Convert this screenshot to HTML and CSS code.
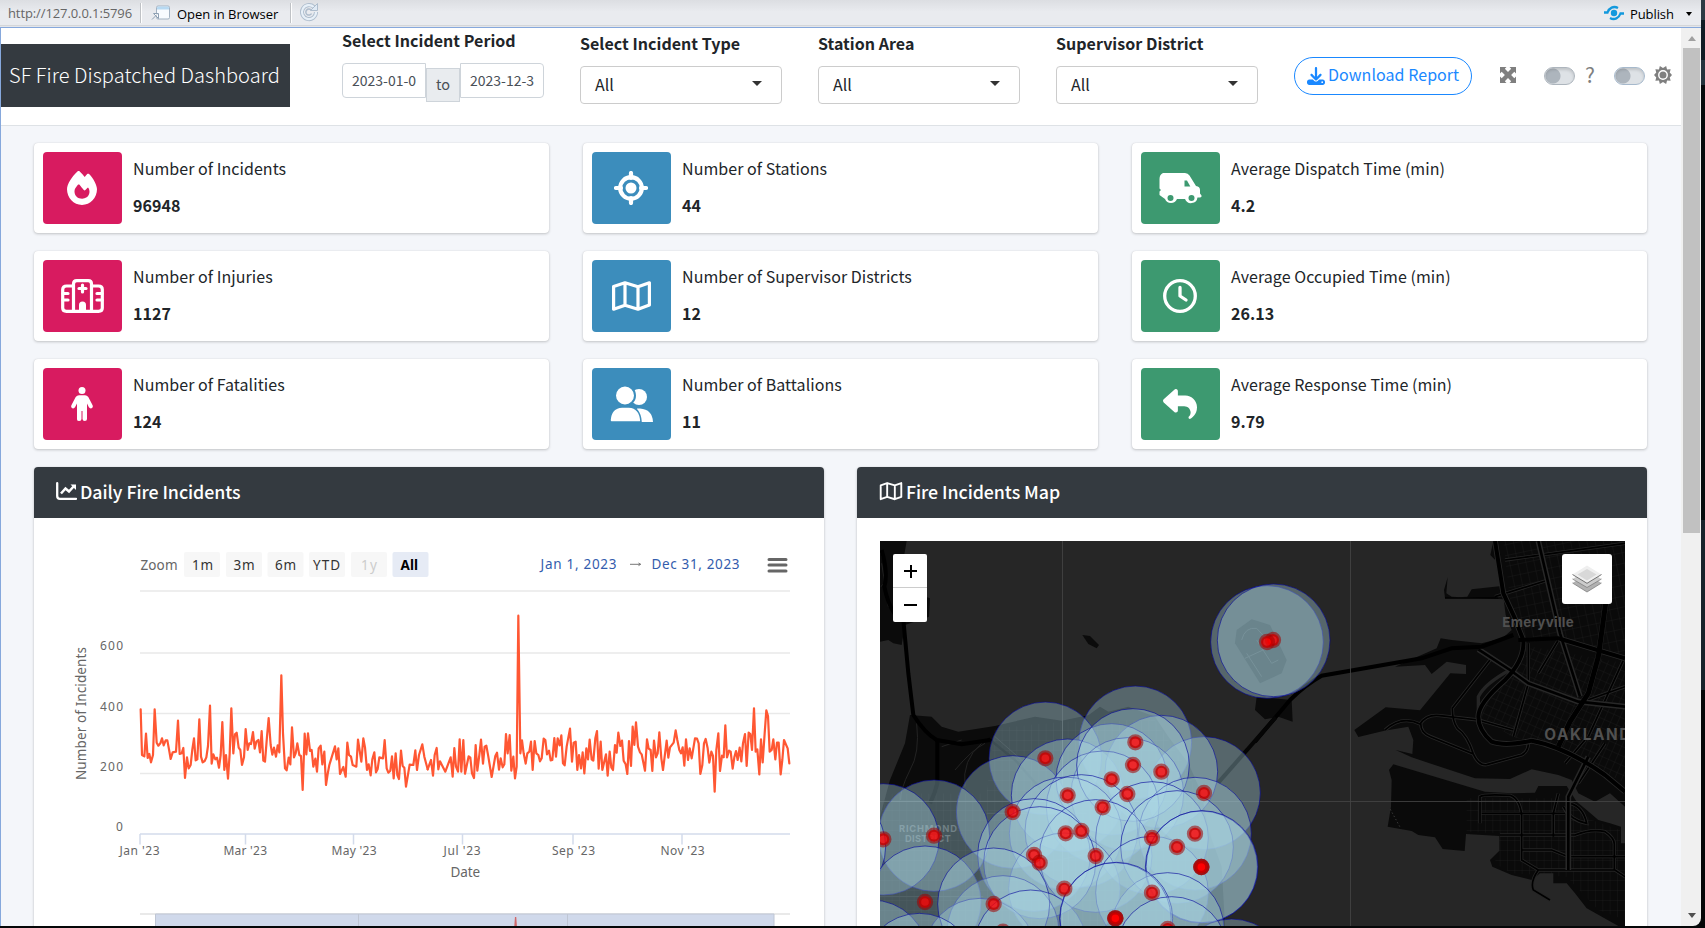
FILE: index.html
```html
<!DOCTYPE html>
<html lang="en">
<head>
<meta charset="utf-8">
<title>SF Fire Dispatched Dashboard</title>
<link rel="stylesheet" href="styles.css">
</head>
<body>
<div class="toolbar">
  <span class="url">http://127.0.0.1:5796</span>
  <i class="sep"></i>
  <svg class="open-icon" viewBox="0 0 20 16"><rect x="5.500" y="1" width="13" height="13" rx="1.500" fill="#f8fbff" stroke="#a3b2c2"/><path d="M6 4.500V2.500q0-1 1-1h10q1 0 1 1v2z" fill="#b7d9f2"/><path d="M1 14.500 6 9.500M2.500 8.500h5v5z" fill="#fff" stroke="#8ea0b3"/></svg>
  <span class="open">Open in Browser</span>
  <i class="sep sep2"></i>
  <svg class="refresh" viewBox="0 0 20 20"><path d="M17 10a7 7 0 1 1-2.200-5" fill="none" stroke="#aebdcd" stroke-width="4"/><path d="M17 10a7 7 0 1 1-2.200-5" fill="none" stroke="#e7f0f8" stroke-width="2.200"/><path d="M18.500 1.500v7h-7z" fill="#dfeaf5" stroke="#aebdcd"/><path d="M12.500 11.500a3 3 0 1 1-.5-3.500" fill="none" stroke="#aebdcd" stroke-width="1.500"/></svg>
  <span class="grow"></span>
  <svg class="pub-icon" viewBox="0 0 20 16"><g fill="none" stroke="#1399dd" stroke-width="2.300"><path d="M0 7.500h3.500C5 3 9.500.500 14 3"/><path d="M20 8.500h-3.500C15 13 10.500 15.500 6 13"/></g><circle cx="10" cy="8" r="3.200" fill="#1399dd"/></svg>
  <span class="pub">Publish</span>
  <i class="tri"></i>
</div>
<div class="viewer">
  <main class="page">
    <header class="head">
      <div class="brand"><span>SF Fire Dispatched Dashboard</span></div>
      <div class="field period">
        <label>Select Incident Period</label>
        <div class="range"><span class="date">2023-01-0</span><span class="to">to</span><span class="date last">2023-12-3</span></div>
      </div>
      <div class="field f-type"><label>Select Incident Type</label><div class="select"><span>All</span><i></i></div></div>
      <div class="field f-area"><label>Station Area</label><div class="select"><span>All</span><i></i></div></div>
      <div class="field f-dist"><label>Supervisor District</label><div class="select"><span>All</span><i></i></div></div>
      <div class="download">
        <svg viewBox="0 0 512 512"><path d="M288 32c0-18-14-32-32-32s-32 14-32 32v243l-73-73c-13-13-33-13-45 0s-13 33 0 45l128 128c12 13 32 13 45 0l128-128c12-12 12-32 0-45s-33-13-46 0l-73 73zM64 352c-35 0-64 29-64 64v32c0 35 29 64 64 64h384c35 0 64-29 64-64v-32c0-35-29-64-64-64H346l-45 45c-25 25-66 25-91 0l-45-45zm368 56a24 24 0 1 1 0 48 24 24 0 1 1 0-48z"/></svg>
        <span>Download Report</span>
      </div>
      <svg class="expand" viewBox="0 0 16 16"><path d="M0 0h6.500L4.800 1.700 8 4.900l3.200-3.200L9.500 0H16v6.500l-1.700-1.700L11.100 8l3.200 3.200L16 9.500V16H9.500l1.700-1.700L8 11.100l-3.200 3.200L6.500 16H0V9.500l1.700 1.700L4.900 8 1.700 4.800 0 6.500z"/></svg>
      <i class="toggle"></i>
      <span class="help">?</span>
      <i class="toggle blue"></i>
      <svg class="gear" viewBox="0 0 20 20"><path d="M10 2.200 13.500 0l1 4 4-.5-1 3.700L20 10l-2.500 2.800 1 3.700-4-.5-1 4L10 17.800 6.500 20l-1-4-4 .5 1-3.700L0 10l2.500-2.800-1-3.700 4 .5 1-4z"/><circle cx="10" cy="10" r="4.700" fill="none" stroke="#fff" stroke-width="1.600"/></svg>
    </header>

    <section class="cards">
      <div class="card"><div class="ico red"><svg width="30" height="34" viewBox="0 0 448 512" preserveAspectRatio="none"><path d="M159.300 5.400c7.800-7.300 19.900-7.200 27.700.1 27.600 25.900 53.500 53.800 77.700 84 11-14.400 23.500-30.100 37-42.900 7.900-7.400 20.100-7.400 28 .1 34.600 33 63.900 76.600 84.500 118 20.300 40.800 33.800 82.500 33.800 111.900C448 404.200 348.200 512 224 512 98.400 512 0 404.100 0 276.500c0-38.400 17.800-85.300 45.400-131.700C73.300 97.700 112.700 48.600 159.300 5.400zM225.700 416c25.300 0 47.700-7 68.800-21 42.100-29.400 53.400-88.200 28.100-134.400-4.500-9-16-9.600-22.500-2l-25.200 29.300c-6.600 7.600-18.500 7.400-24.700-.5-16.500-21-46-58.500-62.800-79.800-6.300-8-18.300-8.100-24.700-.1-33.800 42.500-50.800 69.300-50.800 99.400C112 375.400 162.600 416 225.700 416z"/></svg></div><div class="txt"><span>Number of Incidents</span><b>96948</b></div></div>
      <div class="card"><div class="ico azure"><svg width="34" height="34" viewBox="0 0 34 34"><g fill="none" stroke="#fff"><circle cx="17" cy="17" r="10.800" stroke-width="4.200"/><path d="M17 2v5M17 27v5M2 17h5M27 17h5" stroke-width="4.200" stroke-linecap="round"/></g><circle cx="17" cy="17" r="5.500"/></svg></div><div class="txt"><span>Number of Stations</span><b>44</b></div></div>
      <div class="card"><div class="ico green"><svg width="43" height="34" viewBox="0 0 43 34"><path d="M4 2h22q3 0 4.500 2.500L37 15q4 .5 4 4v3.500l1.500 2q.5 2-1.500 2h-2.500A6.500 6.500 0 0 1 26 28h-8A6.500 6.500 0 0 1 6 28L.5 24v-3.500L2 19l-1.500-1.500V8Q.5 3.500 4 2z"/><g fill="#3d9970"><path d="M25.500 9.500h2.500l3.300 6h-5.800z"/><circle cx="11.500" cy="27" r="3"/><circle cx="32.500" cy="27" r="3"/></g></svg></div><div class="txt"><span>Average Dispatch Time (min)</span><b>4.2</b></div></div>
      <div class="card"><div class="ico red"><svg width="43" height="34" viewBox="0 0 43 34"><g fill="none" stroke="#fff" stroke-width="3.200" stroke-linejoin="round" stroke-linecap="round"><path d="M12.500 7H5.500Q1.700 7 1.700 10.500V29q0 3.300 3.800 3.300h32q3.800 0 3.800-3.300V10.500q0-3.500-3.800-3.500h-7"/><path d="M12.500 32V5q0-3.300 3.300-3.300h11.400q3.300 0 3.300 3.300v27M21.500 6v7M18 9.500h7M2 14.500h5M2 21h5M36 14.500h5M36 21h5"/></g><path d="M18 33v-7a3.500 3.500 0 0 1 7 0v7z"/></svg></div><div class="txt"><span>Number of Injuries</span><b>1127</b></div></div>
      <div class="card"><div class="ico azure"><svg class="map-i" width="39" height="34" viewBox="0 0 39 34"><path d="M1.600 7.500 13 3.800l13 4 11.400-4V26L26 30.200l-13-4-11.400 4zM13 4v22M26 8v22"/></svg></div><div class="txt"><span>Number of Supervisor Districts</span><b>12</b></div></div>
      <div class="card"><div class="ico green"><svg width="34" height="34" viewBox="0 0 34 34"><g fill="none" stroke="#fff" stroke-width="3.300"><circle cx="17" cy="17" r="15.300"/><path d="M17 8.500V17l6 4" stroke-linecap="round" stroke-linejoin="round"/></g></svg></div><div class="txt"><span>Average Occupied Time (min)</span><b>26.13</b></div></div>
      <div class="card"><div class="ico red"><svg width="22" height="34" viewBox="0 0 22 34"><circle cx="11" cy="3.500" r="3.500"/><path d="M8 8.300h6q2 0 3.300 1.700l4.300 8.300q.8 2.300-1 3-1.700.6-2.700-1L16 16.500V32q0 2-2.200 2t-2.300-2v-8h-1v8q0 2-2.300 2T6 32V16.500l-2 3.800q-1 1.600-2.700 1-1.700-.7-.9-3L4.700 10Q6 8.300 8 8.300z"/></svg></div><div class="txt"><span>Number of Fatalities</span><b>124</b></div></div>
      <div class="card"><div class="ico azure"><svg width="43" height="36" viewBox="0 0 43 36"><circle cx="29" cy="11" r="8"/><path d="M27 22.500h3q12.500 1 13 13.500H30z"/><circle cx="15" cy="9.500" r="10" stroke="#3c8dbc" stroke-width="2"/><path d="M0 34Q1 21.500 12 21h7q11 .5 12 14.500l-1 .5H1.500Q0 36 0 34z" stroke="#3c8dbc" stroke-width="1.500"/></svg></div><div class="txt"><span>Number of Battalions</span><b>11</b></div></div>
      <div class="card"><div class="ico green"><svg width="34" height="34" viewBox="0 0 512 512"><path d="M205 34.800c11.500 5.100 19 16.600 19 29.200v64h112c97.200 0 176 78.800 176 176 0 113.300-81.500 163.900-100.200 174.100-2.500 1.400-5.300 1.900-8.100 1.900-10.900 0-19.700-8.900-19.700-19.700 0-7.500 4.300-14.400 9.800-19.500 9.400-8.800 22.200-26.400 22.200-56.700 0-53-43-96-96-96h-96v64c0 12.600-7.400 24.100-19 29.200s-25 3-34.400-5.400l-160-144C3.900 225.700 0 217.100 0 208s3.900-17.700 10.600-23.800l160-144c9.400-8.500 22.900-10.600 34.400-5.400z"/></svg></div><div class="txt"><span>Average Response Time (min)</span><b>9.79</b></div></div>
    </section>

    <section class="panels">
      <article class="panel">
        <h2><svg width="21" height="18" viewBox="0 0 21 18"><path d="M1.200 1.200V14q0 2.800 2.800 2.800h16" fill="none" stroke="#fff" stroke-width="2.300" stroke-linecap="round"/><path d="M5 11.500l4.500-5 3.500 3 5.500-6" fill="none" stroke="#fff" stroke-width="2.500"/><path d="M14.500 2.500h5.500v5.500z" fill="#fff"/></svg><span class="t1">Daily Fire Incidents</span></h2>
        <svg class="chart" viewBox="34 518 790 408">
          <g class="btns"><rect x="184" y="552" width="36" height="25" rx="2"/><rect x="226" y="552" width="36" height="25" rx="2"/><rect x="267.500" y="552" width="36" height="25" rx="2"/><rect x="309" y="552" width="36" height="25" rx="2"/><rect x="351" y="552" width="36" height="25" rx="2"/><rect class="on" x="392.500" y="552" width="36" height="25" rx="2"/></g>
          <g class="btxt"><text class="mut" x="140.500" y="569.500" textLength="37">Zoom</text><text x="192" y="569.500" textLength="21">1m</text><text x="233.500" y="569.500" textLength="21">3m</text><text x="275" y="569.500" textLength="21">6m</text><text x="313" y="569.500" textLength="27">YTD</text><text class="dis" x="361" y="569.500" textLength="16">1y</text><text class="bold" x="400.500" y="569.500" textLength="17.500">All</text></g>
          <g class="rtxt"><text x="540.500" y="568.500" textLength="76">Jan 1, 2023</text><text x="651.500" y="568.500" textLength="88">Dec 31, 2023</text></g>
          <path d="M630 564.300h10.500M638.500 563l2.200 1.300-2.200 1.300" fill="none" stroke="#777"/>
          <path d="M769 559.500h17M769 565h17M769 571h17" stroke="#666" stroke-width="3" stroke-linecap="round"/>
          <path d="M140 591h650M140 653h650M140 713.500h650M140 773.500h650" stroke="#e9e9e9" stroke-width="1.500"/>
          <path d="M140 834h650M140 834v10.500M245.500 834v10.500M353.500 834v10.500M462.500 834v10.500M573 834v10.500M682 834v10.500" stroke="#d3dbeb" stroke-width="1.500" fill="none"/>
          <g class="axis"><text x="100" y="649.500" textLength="23">600</text><text x="100" y="710.500" textLength="23">400</text><text x="100" y="770.500" textLength="23">200</text><text x="116" y="830.500" textLength="7.500">0</text>
          <text x="119.500" y="854.500" textLength="40">Jan '23</text><text x="223.500" y="854.500" textLength="43.500">Mar '23</text><text x="331.500" y="854.500" textLength="45">May '23</text><text x="443.500" y="854.500" textLength="37">Jul '23</text><text x="552" y="854.500" textLength="43">Sep '23</text><text x="660.500" y="854.500" textLength="44">Nov '23</text></g>
          <g class="atitle"><text x="450.500" y="876.500" textLength="29.500">Date</text><text transform="translate(86 780) rotate(-90)" textLength="133">Number of Incidents</text></g>
          <g fill="none" stroke="#ff5733" stroke-width="6.600" stroke-linejoin="round" stroke-linecap="round">
            <polyline transform="translate(30 520) scale(.33333)" points="332,568 336,705 343,709 348,641 353,714 358,702 363,727 369,705 374,568 380,668 385,677 391,670 396,655 401,676 407,661 412,661 417,688 422,717 428,697 438,695 444,602 449,702 455,700 460,684 465,774 471,712 476,745 482,735 487,688 492,655 497,721 502,718 508,598 513,710 518,727 524,723 529,712 534,678 540,557 545,731 550,703 556,718 561,713 567,743 572,705 577,606 583,750 588,705 594,776 599,702 604,565 610,700 615,643 620,638 626,683 631,690 636,735 642,712 647,627 653,690 658,670 663,672 669,636 674,686 679,665 685,660 690,697 695,633 700,722 705,725 711,650 716,594 722,675 727,704 732,683 738,710 743,676 748,697 754,466 759,640 765,745 770,751 776,713 781,733 786,622 792,712 797,700 802,670 808,705 813,708 818,810 824,641 829,703 834,640 840,693 845,690 850,740 856,716 861,755 866,685 872,677 877,733 883,695 888,795 893,762 898,735 915,679 920,718 925,685 930,762 940,741 947,770 952,668 957,705 963,710 968,735 979,740 984,659 994,725 1000,655 1005,682 1011,750 1016,733 1022,766 1027,718 1033,697 1038,757 1043,747 1048,712 1059,715 1064,660 1070,745 1075,758 1081,752 1086,709 1091,775 1097,700 1102,765 1107,777 1113,692 1118,738 1123,743 1128,800 1139,734 1150,735 1156,691 1161,750 1167,705 1177,673 1183,710 1193,748"/>
            <polyline transform="translate(425 520) scale(.33333)" points="8,748 18,720 24,767 29,705 35,684 40,748 45,724 61,755 77,712 83,770 88,684 93,740 99,755 104,658 109,755 115,660 120,761 131,709 136,713 141,760 147,774 152,675 157,752 163,705 168,659 174,731 179,680 184,677 190,710 200,771 211,708 216,698 222,749 227,715 233,742 238,733 243,642 248,700 254,645 259,752 265,710 270,775 275,740 280,287 286,700 291,661 296,700 302,731 307,700 313,695 318,665 323,750 329,663 334,700 340,705 345,724 350,715 356,656 361,660 366,703 372,692 377,721 382,720 388,654 393,710 398,655 404,676 409,646 414,730 419,736 425,680 435,626 441,725 446,668 452,665 457,750 462,705 468,745 473,697 478,760 484,685 489,718 494,659 500,718 505,722 511,655 516,633 521,746 527,665 532,750 543,703 548,767 554,695 559,742 564,750 570,675 575,698 580,638 586,678 591,662 596,722 602,733 607,762 612,663 618,738 623,620 628,675 633,607 639,680 645,697 650,703 660,752 666,658 671,686 677,690 682,753 687,662 693,712 698,700 703,637 709,715 714,750 725,662 730,713 735,682 746,668 752,631 757,660 763,690 768,700 773,682 778,737 783,658 789,720 794,685 800,715 810,655 816,656 821,670 826,762 832,735 837,670 842,657 848,685 853,728 859,695 864,708 869,815 874,690 880,640 885,753 891,707 896,712 901,616 906,712 912,692 917,695 923,746 928,712 933,693 938,720 944,683 949,724 954,670 960,642 965,738 971,638 976,642 981,690 987,565 992,695 997,688 1003,763 1008,658 1013,727 1019,640 1024,571 1029,588 1034,695 1040,690 1045,658 1051,718 1056,668 1061,668 1067,763 1072,720 1077,660 1088,685 1093,730"/>
          </g>
          <path d="M140 914h650" stroke="#e2e2e2" stroke-width="1.500"/>
          <rect x="155.500" y="914" width="618.500" height="14" fill="#d0d9eb"/>
          <path d="M155.500 930V914H774v16M358.500 914v14M567.500 914v14" fill="none" stroke="#bfc6d4"/>
          <path d="M514.800 928l.8-11 .8 11" fill="none" stroke="#d0686a" stroke-width="1.300"/>
        </svg>
      </article>
      <article class="panel">
        <h2><svg class="map-i" width="24" height="20" viewBox="0 0 39 34"><path d="M2 7.500 13 3.500l13 4 11-4V27l-11 4-13-4-11 4zM13 4v22M26 8v22"/></svg><span class="t2">Fire Incidents Map</span></h2>
        <div class="map">
          <svg viewBox="75 33 2235 1155">
            <defs>
              <pattern id="ga" width="24" height="32" patternUnits="userSpaceOnUse" patternTransform="rotate(-12)"><path d="M0 0H24M0 0V32" stroke="#242424" stroke-width="1.600" fill="none"/></pattern>
              <pattern id="gb" width="20" height="26" patternUnits="userSpaceOnUse" patternTransform="rotate(24)"><path d="M0 0H20M0 0V26" stroke="#242424" stroke-width="1.600" fill="none"/></pattern>
              <pattern id="gc" width="22" height="30" patternUnits="userSpaceOnUse"><path d="M0 0H22M0 0V30" stroke="#242424" stroke-width="1.600" fill="none"/></pattern>
            </defs>
            <rect x="75" y="33" width="2235" height="1155" fill="#262626"/>
            <g fill="#0b0b0b">
              <path d="M75 33H155L145 90 150 180 225 205 222 260 150 285 140 345 115 340 100 330 75 335z"/>
              <path d="M165 555 230 560 260 590 310 605 420 588 540 560 620 572 700 556 735 530 760 545 820 530 900 560 940 620 1000 700 1040 790 1060 900 1100 1010 1110 1188H75V860L105 750 150 640z"/>
              <path d="M682 315 705 318 732 345 725 355 700 342z"/>
              <path d="M1145 300 1190 268 1245 285 1295 390 1280 430 1215 460 1140 340z"/>
              <path d="M1205 500 1310 510 1313 575 1270 560 1230 568 1200 540z"/>
            </g>
            <rect x="75" y="790" width="320" height="398" fill="url(#gc)"/>
            <path d="M420 595 620 575 900 570 1000 720 1060 900V1188H395V790z" fill="url(#gc)"/>
            <g fill="none" stroke="#232323" stroke-width="3"><path d="M165 720q-30 60-28 90M185 580q10 90-20 140M260 650l60-20M300 720q50-60 90-80M330 770q-10-80 50-130M420 620l80 70M510 1010l400-80M395 850h300M640 810v370M75 1100h310M78 70q30 80 0 100M80 100l20 130"/></g>
            <path d="M1160 330q10-40 45-35 30 30 50 60M1170 385l65-30M1175 370l45 70M1205 330l45 70 20-10" fill="none" stroke="#2c2c2c" stroke-width="3"/>
            <g fill="none" stroke="#000"><path d="M80 60q20 70 8 110 10 50 30 80M145 270 160 430 175 555Q210 610 245 630L320 643 405 630" stroke-width="12"/><path d="M247 630V760Q240 790 225 820" stroke-width="12"/><path d="M400 625 480 690 560 780" stroke-width="7"/></g>
            <g transform="translate(1230 0)">
              <g fill="#0a0a0a">
                <path d="M685 33 676 75 700 100 710 168 620 178 607 200 540 204 537 180 548 142 544 190 560 200 716 208 722 255 740 300 712 325 650 340 560 330 527 325 515 355 390 410 480 405 500 432 545 395 603 405 603 432 556 430 465 541 362 532 268 600 280 621 358 602 430 590 445 630 442 672 392 660 440 682 630 745 735 747 800 718 880 735 920 750 940 790 990 815 1035 790 1080 830V33z"/>
                <path d="M385 703 372 720 380 750 378 830 368 890 440 903 460 915 510 922 533 957 599 963 603 912 703 918V962L675 990 682 1010 740 1035 800 1050 825 1030H865V1060H905L930 1090 965 1135 1060 1188H1080V940H1068V890L1035 880 1000 870 965 840 935 815 905 768H820L810 788 740 790 660 785 560 755z"/>
              </g>
              <path d="M715 33H1080V380L890 330 780 335 740 250z" fill="url(#ga)"/>
              <path d="M800 350 1080 400V760L870 650 740 620 650 560 660 500 770 400z" fill="url(#gb)"/>
              <path d="M605 805H900L980 870 1065 900V940H1080V1170L1000 1140 905 1040 740 1030 690 1000 705 910 605 905z" fill="url(#gc)"/>
              <g fill="none" stroke="#252525" stroke-width="10">
                <path d="M360 600q50-45 105-18 20-30 60-25L640 570 745 600M467 580q0 30 30 40L625 672q15 35 40 32L770 675q20-10 20-35M562 535q0 40 15 60 30 20 48 77M562 535 675 390M645 880V800q10-8 90-4 30 10 35 60V990L820 1020q-25 35-15 60l50 30M770 960H860l50 20H1080M650 850H900M705 915H930q50-20 90-10 30 20 28 40V1020M820 1020H1050L1080 1040M865 850v70M880 790 865 850M895 830q20 40 70 50-10-50-50-60M790 340V460L745 620M640 565V500q20-40 95-80M850 150 690 200M720 90 1080 40M880 330 820 430M1080 380 970 620M900 700 960 630M940 520 1080 470M940 760 1020 640"/>
              </g>
              <g fill="none" stroke="#000" stroke-width="5">
                <path d="M360 600q50-45 105-18 20-30 60-25L640 570 745 600M467 580q0 30 30 40L625 672q15 35 40 32L770 675q20-10 20-35M562 535q0 40 15 60 30 20 48 77M562 535 675 390M645 880V800q10-8 90-4 30 10 35 60V990L820 1020q-25 35-15 60l50 30M770 960H860l50 20H1080M650 850H900M705 915H930q50-20 90-10 30 20 28 40V1020M820 1020H1050L1080 1040M865 850v70M880 790 865 850M895 830q20 40 70 50-10-50-50-60M790 340V460L745 620M850 150 690 200M720 90 1080 40M880 330 820 430M1080 380 970 620M900 700 960 630M940 520 1080 470M940 760 1020 640M540 204H700"/>
              </g>
              <g fill="none" stroke="#282828" stroke-width="17"><path d="M690 33 715 190Q750 260 775 330 780 390 720 450 640 520 640 560 640 600 680 635 720 650 800 632 900 650 1020 735L1080 785M880 325 1080 385M1022 220 1000 380 970 490 915 575 880 650M820 33 885 310 945 500M640 358 735 420 790 460 940 515 1080 530M970 680 910 800V1020"/></g>
              <g fill="none" stroke="#000">
                <path d="M690 33 715 190Q750 260 775 330 780 390 720 450 640 520 640 560 640 600 680 635 720 650 800 632 900 650 1020 735L1080 785" stroke-width="12"/>
                <path d="M-30 635 75 510Q120 465 170 437L470 385 560 355 650 350 745 315M760 330 880 325 1080 385" stroke-width="12"/>
                <path d="M1022 220 1000 380 970 490 915 575 880 650" stroke-width="15"/>
                <path d="M820 33 885 310 945 500M640 358 735 420 790 460 940 515 1080 530M970 680 910 800V1020" stroke-width="8"/>
              </g>
              <path d="M376 838l30 55" stroke="#555" stroke-width="2" stroke-dasharray="4 7"/>
            </g>
            <path d="M1262 562 1090 758" stroke="#050505" stroke-width="12"/>
            <g class="place"><text x="1942" y="292" font-size="40" textLength="214">Emeryville</text><text x="2068" y="631" font-size="46" textLength="258">OAKLAND</text><text x="132" y="905" font-size="28" textLength="174">RICHMOND</text><text x="150" y="935" font-size="28" textLength="137">DISTRICT</text></g>
            <path d="M622.500 33V1188M1486.500 33V1188M75 814.500H2310" stroke="#454545" stroke-width="2.500"/>
            <g class="zones"><circle cx="1236" cy="336" r="169"/><circle cx="1256" cy="331" r="169"/><circle cx="841" cy="637" r="169"/><circle cx="571" cy="685" r="169"/><circle cx="1047" cy="789" r="169"/><circle cx="473" cy="846" r="169"/><circle cx="237" cy="917" r="167"/><circle cx="85" cy="928" r="167"/><circle cx="-77" cy="950" r="169"/><circle cx="638" cy="796" r="169"/><circle cx="919" cy="725" r="169"/><circle cx="770" cy="748" r="167"/><circle cx="817" cy="792" r="169"/><circle cx="743" cy="832" r="169"/><circle cx="834" cy="705" r="169"/><circle cx="632" cy="910" r="169"/><circle cx="679" cy="903" r="169"/><circle cx="1020" cy="911" r="169"/><circle cx="891" cy="924" r="169"/><circle cx="537" cy="975" r="169"/><circle cx="628" cy="1076" r="167"/><circle cx="722" cy="978" r="169"/><circle cx="554" cy="998" r="168"/><circle cx="966" cy="951" r="169"/><circle cx="891" cy="1088" r="169"/><circle cx="1039" cy="1011" r="168"/><circle cx="1041" cy="1010" r="168"/><circle cx="210" cy="1116" r="168"/><circle cx="444" cy="1205" r="168"/><circle cx="375" cy="1273" r="168"/><circle cx="416" cy="1122" r="168"/><circle cx="50" cy="1278" r="168"/><circle cx="193" cy="1318" r="168"/><circle cx="527" cy="1248" r="168"/><circle cx="938" cy="1197" r="169"/><circle cx="781" cy="1165" r="167"/><circle cx="784" cy="1166" r="169"/><circle cx="1130" cy="1335" r="168"/><circle cx="950" cy="1268" r="168"/></g>
            <g class="dots"><circle cx="1254" cy="330" r="18"/><circle cx="1236" cy="336" r="18"/><circle cx="841" cy="637" r="18"/><circle cx="571" cy="685" r="18"/><circle cx="834" cy="705" r="18"/><circle cx="919" cy="725" r="18"/><circle cx="770" cy="748" r="18"/><circle cx="817" cy="792" r="18"/><circle cx="1047" cy="789" r="18"/><circle cx="638" cy="796" r="18"/><circle cx="743" cy="832" r="18"/><circle cx="473" cy="846" r="18"/><circle cx="632" cy="910" r="18"/><circle cx="679" cy="903" r="18"/><circle cx="891" cy="924" r="18"/><circle cx="1020" cy="911" r="18"/><circle cx="966" cy="951" r="18"/><circle cx="537" cy="975" r="18"/><circle cx="554" cy="998" r="18"/><circle cx="722" cy="978" r="18"/><circle cx="1039" cy="1011" r="18"/><circle cx="1039" cy="1011" r="18"/><circle cx="1039" cy="1011" r="18"/><circle cx="237" cy="917" r="18"/><circle cx="85" cy="928" r="18"/><circle cx="628" cy="1076" r="18"/><circle cx="891" cy="1088" r="18"/><circle cx="210" cy="1116" r="18"/><circle cx="416" cy="1122" r="18"/><circle cx="781" cy="1165" r="18"/><circle cx="781" cy="1165" r="18"/><circle cx="781" cy="1165" r="18"/><circle cx="444" cy="1205" r="18"/><circle cx="938" cy="1197" r="18"/></g>
          </svg>
          <div class="zoom"><i></i><i class="minus"></i></div>
          <div class="layers"><svg width="30" height="30" viewBox="0 0 30 30"><path d="M.5 19 15 10.500 29.500 19 15 28z" fill="#b2b2b2"/><path d="M.5 19 15 28l14.500-9" fill="none" stroke="#777" stroke-width=".7"/><path d="M.5 15 15 6.500 29.500 15 15 23.500z" fill="#ccc"/><path d="M.5 15 15 23.500 29.500 15" fill="none" stroke="#777" stroke-width=".7"/><path d="M.5 10.500 15 1.500l14.500 9L15 19.300z" fill="#efefef"/><path d="M.5 10.500 15 19.300l14.500-8.800" fill="none" stroke="#666" stroke-width=".9"/><path d="M5.500 10.500 15 5l9.500 5.500L15 16.500z" fill="#d8d8d8"/></svg></div>
        </div>
      </article>
    </section>
  </main>
  <div class="scroll"><i class="up"></i><i class="thumb"></i><i class="down"></i></div>
</div>
<div class="edge"></div>
</body>
</html>
```
FILE: styles.css
```css
* { box-sizing: border-box; }
html, body { margin: 0; height: 928px; overflow: hidden; }
body {
  display: grid;
  grid-template: 27px 899px / 1701px 4px;
  background: #050708;
  font-family: "Noto Sans CJK SC", "Noto Sans", sans-serif;
  color: #212529;
}
svg { display: block; flex: none; }

.toolbar {
  display: flex;
  align-items: center;
  height: 27px;
  background: linear-gradient(#dcdee2, #e9ebef 45%, #e9ebef);
  border-bottom: 1px solid #e3e5e9;
  box-shadow: inset 0 -1px 0 #d4d6d9;
  font: 13.500px "Open Sans", sans-serif;
  color: #000;
}
.url { width: 133px; padding-left: 8px; color: #666; font-size: 13px; letter-spacing: -.1px; white-space: nowrap; }
.sep { width: 2px; height: 20px; margin-left: 7px; border-left: 1px solid #bfc2c6; border-right: 1px solid #fff; }
.sep2 { margin-left: 12px; }
.open-icon { width: 20px; height: 16px; margin-left: 9px; }
.open { width: 101px; margin-left: 6px; font-size: 13px; letter-spacing: -.03px; white-space: nowrap; padding-top: 1px; }
.refresh { width: 20px; height: 20px; margin: -3px 0 0 7px; }
.grow { flex: 1; }
.pub-icon { width: 20px; height: 16px; margin: -1px 6px 0 0; }
.pub { width: 45px; font-size: 13px; letter-spacing: -.1px; padding-top: 1px; }
.tri { margin: 1px 9px 0 11px; border: 3px solid transparent; border-top: 4px solid #000; border-bottom: 0; }

.viewer {
  grid-row: 2;
  display: flex;
  border: 1px solid #86a8dc;
  border-width: 1px 0 0 1px;
  background: #f0f0f0;
  border-radius: 0 0 8px 0;
  overflow: hidden;
}
.edge { grid-column: 2; grid-row: 1 / 3; background: linear-gradient(#2c3a44 0 20px, #101c25 20px 60px, #24333d 60px 85px, #060a0c 85px 520px, #16222a 520px 690px, #050708 690px); }
.page { width: 1680px; height: 898px; overflow: hidden; background: #f4f6fa; }

.head { display: flex; height: 98px; background: #fff; border-bottom: 1px solid #dee2e6; }
.brand { width: 289px; height: 63px; margin-top: 16px; background: #343a40; color: #fff; font-size: 20px; font-weight: 300; line-height: 61px; letter-spacing: .06px; padding-left: 8px; white-space: nowrap; }
.field label { display: block; font-size: 16px; font-weight: 700; line-height: 22px; letter-spacing: .03px; white-space: nowrap; }
.period { width: 202px; margin-left: 52px; padding-top: 1px; }
.range { display: flex; margin-top: 12px; }
.date { width: 84px; height: 35px; border: 1px solid #ced4da; border-radius: 4px 0 0 4px; padding-left: 9px; font-size: 14px; line-height: 33px; color: #495057; }
.date.last { border-radius: 0 4px 4px 0; }
.to { width: 34px; height: 34px; margin-top: 5px; background: #e9ecef; border: 1px solid #ced4da; font-size: 14.500px; line-height: 29px; text-align: center; color: #495057; }
.f-type, .f-area, .f-dist { width: 202px; margin-left: 36px; padding-top: 4px; }
.select { display: flex; justify-content: space-between; align-items: flex-start; height: 38px; margin-top: 12px; padding: 0 19px 0 14px; border: 1px solid #ccc; border-radius: 4px; font-size: 16px; line-height: 34px; }
.select i { border: 5px solid transparent; border-top-color: #333; border-bottom: 0; margin-top: 14px; }
.download { display: flex; align-items: center; width: 178px; height: 38px; margin: 29px 0 0 36px; padding-left: 12px; border: 1px solid #1a88ff; border-radius: 19px; color: #1a88ff; font-size: 16px; line-height: 32px; letter-spacing: .05px; white-space: nowrap; }
.download span { height: 36px; }
.download svg { width: 18px; height: 18px; margin-right: 3px; fill: #1a88ff; }
.expand { width: 16px; height: 16px; margin: 39px 28px 0; fill: #7f7f7f; }
.toggle { width: 31px; height: 18px; margin-top: 39px; border: 1px solid #adb5bd; border-radius: 9px; background: radial-gradient(circle at 8px 8px, #adb5bd 7px, #dee2e6 8px); box-shadow: inset 0 2px 3px #0002; }
.toggle.blue { margin-left: 18px; border-color: #a6b9cc; }
.help { width: 11px; margin: 32px 0 0 10px; color: #7f7f7f; font-size: 21px; line-height: 28px; }
.gear { width: 18px; height: 18px; margin: 38px 0 0 9px; fill: #7f7f7f; }

.cards { display: grid; grid-template-columns: repeat(3, 515px); gap: 18px 34px; padding: 17px 33px 0; }
.card { display: flex; height: 90px; padding: 9px; background: #fff; border-radius: 4px; box-shadow: 0 0 1px #0002, 0 1px 3px #0003; }
.ico { display: grid; place-items: center; width: 79px; height: 72px; padding: 0 1px 1px 0; border-radius: 4px; }
.ico svg { fill: #fff; }
.red { background: #d81b60; }
.azure { background: #3c8dbc; }
.green { background: #3d9970; }
.txt { display: flex; flex-direction: column; padding: 4px 0 0 11px; white-space: nowrap; font-size: 16px; }
.txt span { line-height: 24px; letter-spacing: .06px; }
.txt b { line-height: 24px; margin-top: 13px; letter-spacing: .06px; }
.map-i path { fill: none; stroke: #fff; stroke-width: 3.200; stroke-linejoin: round; }

.panels { display: grid; grid-template-columns: 790px 790px; gap: 33px; padding: 18px 33px 0; }
.panel { height: 480px; background: #fff; border-radius: 4px 4px 0 0; box-shadow: 0 0 1px #0002, 0 1px 3px #0003; }
.panel h2 { display: flex; align-items: center; height: 51px; margin: 0; padding: 0 22px 2px; background: #343a40; color: #fff; border-radius: 4px 4px 0 0; font-size: 17.800px; font-weight: 500; line-height: 46px; letter-spacing: -.06px; white-space: nowrap; }
.panel h2 svg { margin: -2px 3px 0 0; }
.panel h2 span { height: 48px; }
.chart { width: 790px; height: 408px; font-family: "Noto Sans", sans-serif; }
.btns rect { fill: #f7f7f7; }
.btns .on { fill: #e6ebf5; }
.btxt { font-size: 13.500px; fill: #333; }
.btxt .mut { fill: #666; }
.btxt .dis { fill: #ccc; }
.btxt .bold { font-weight: 700; fill: #000; }
.rtxt { font-size: 13.500px; fill: #335cad; }
.axis { font-size: 12px; fill: #666; }
.atitle { font-size: 13.500px; fill: #666; }

.map { position: relative; width: 745px; height: 385px; margin: 23px 0 0 23px; overflow: hidden; }
.map > svg { width: 745px; height: 385px; }
.place { font-family: Inter, sans-serif; font-weight: 700; fill: #505050; }
.zones circle { fill: #add8e6; fill-opacity: .36; stroke: #00009a; stroke-opacity: .6; stroke-width: 3; }
.dots circle { fill: #f00; fill-opacity: .8; stroke: #a00000; stroke-opacity: .55; stroke-width: 13; }
.zoom { position: absolute; left: 13px; top: 13px; width: 34px; height: 68px; background: #fff; border-radius: 2px; }
.zoom i { display: block; height: 34px; background: linear-gradient(#000, #000) 11px 16px / 13px 2px no-repeat, linear-gradient(#000, #000) 17px 11px / 2px 13px no-repeat; border-bottom: 1px solid #ccc; }
.zoom .minus { border: 0; background: linear-gradient(#000, #000) 11px 16px / 13px 2px no-repeat; }
.layers { position: absolute; right: 13px; top: 13px; display: grid; place-items: center; width: 50px; height: 50px; background: #fff; border-radius: 3px; }

.scroll { display: flex; flex-direction: column; align-items: center; width: 20px; padding: 8px 1px 8px 2px; }
.up { border: 4.500px solid transparent; border-bottom: 5px solid #a0a0a0; border-top: 0; }
.thumb { width: 17px; height: 485px; margin-top: 7px; background: #c1c1c1; }
.down { margin-top: auto; border: 4.500px solid transparent; border-top: 5px solid #505050; border-bottom: 0; }
```
